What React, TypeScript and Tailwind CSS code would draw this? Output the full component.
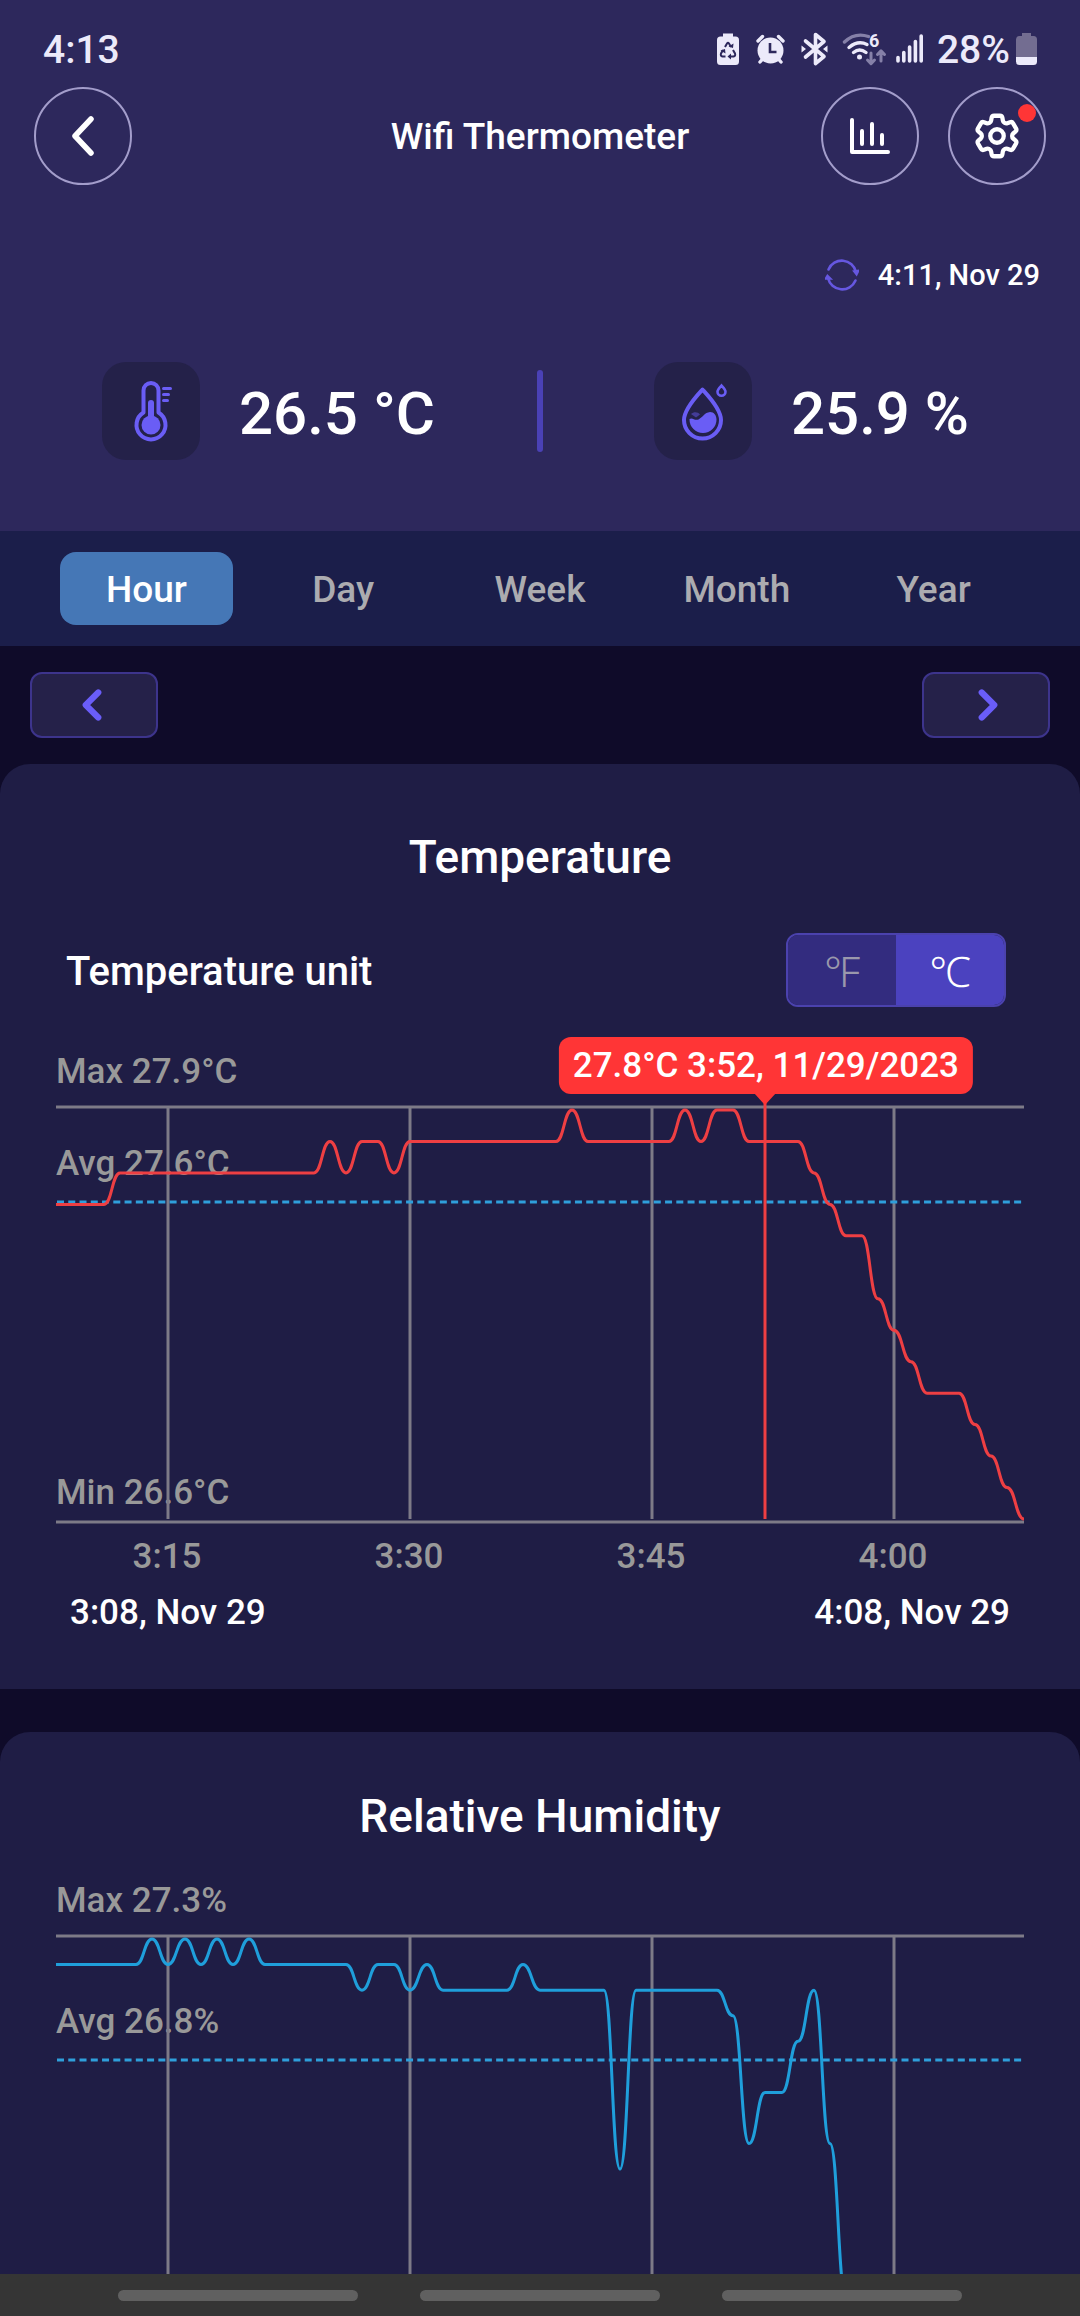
import React, { useState } from 'react';
import { ChevronLeft, ChevronRight } from 'lucide-react';
import { HiOutlineCog6Tooth } from 'react-icons/hi2';

const PERIODS = ['Hour', 'Day', 'Week', 'Month', 'Year'];

// One reading per minute, 3:08 to 4:08
const TEMPERATURE = [
  27.6, 27.6, 27.6, 27.6, 27.7, 27.7, 27.7, 27.7, 27.7, 27.7, 27.7, 27.7, 27.7, 27.7, 27.7,
  27.7, 27.7, 27.8, 27.7, 27.8, 27.8, 27.7, 27.8, 27.8, 27.8, 27.8, 27.8, 27.8, 27.8, 27.8,
  27.8, 27.8, 27.9, 27.8, 27.8, 27.8, 27.8, 27.8, 27.8, 27.9, 27.8, 27.9, 27.9, 27.8, 27.8,
  27.8, 27.8, 27.7, 27.6, 27.5, 27.5, 27.3, 27.2, 27.1, 27.0, 27.0, 27.0, 26.9, 26.8, 26.7,
  26.6,
];

const HUMIDITY = [
  27.2, 27.2, 27.2, 27.2, 27.2, 27.2, 27.3, 27.2, 27.3, 27.2, 27.3, 27.2, 27.3, 27.2, 27.2,
  27.2, 27.2, 27.2, 27.2, 27.1, 27.2, 27.2, 27.1, 27.2, 27.1, 27.1, 27.1, 27.1, 27.1, 27.2,
  27.1, 27.1, 27.1, 27.1, 27.1, 26.4, 27.1, 27.1, 27.1, 27.1, 27.1, 27.1, 27.0, 26.5, 26.7,
  26.7, 26.9, 27.1, 26.5, 25.9,
];

const TICKS = [
  { minute: 7, label: '3:15' },
  { minute: 22, label: '3:30' },
  { minute: 37, label: '3:45' },
  { minute: 52, label: '4:00' },
];

const CHART_WIDTH = 968;
const PLOT_TOP = 63;
const PLOT_BOTTOM = 472;

const minuteToX = (minute: number) => Math.floor((minute / 60) * CHART_WIDTH);

const valueToY = (value: number, min: number, max: number) =>
  PLOT_TOP + ((max - value) / (max - min)) * (PLOT_BOTTOM - PLOT_TOP);

// Smooth line that is level at every reading
const buildPath = (values: number[], min: number, max: number) =>
  values
    .map((value, i) => {
      const x = minuteToX(i);
      const y = valueToY(value, min, max);
      if (i === 0) return `M${x} ${y}`;
      const prevX = minuteToX(i - 1);
      const prevY = valueToY(values[i - 1], min, max);
      const midX = (prevX + x) / 2;
      return `C${midX} ${prevY} ${midX} ${y} ${x} ${y}`;
    })
    .join('');

interface ChartProps {
  name: string;
  values: number[];
  min: number;
  max: number;
  avgLabel: number;
  avgY: number;
  unit: string;
  color: string;
  showAxis?: boolean;
  marker?: { minute: number; text: string };
}

const Chart: React.FC<ChartProps> = ({
  name, values, min, max, avgLabel, avgY, unit, color, showAxis = false, marker
}) => {
  return (
    <div className="relative mx-14">
      <svg viewBox={`0 0 ${CHART_WIDTH} 533`} className="block w-full" role="img" aria-label={name}>
        <g fill="#999999" className="text-[35px] font-medium">
          <text x="0" y="36">{`Max ${max.toFixed(1)}${unit}`}</text>
          <text x="0" y={avgY - 27}>{`Avg ${avgLabel.toFixed(1)}${unit}`}</text>
          {showAxis && <text x="0" y="457">{`Min ${min.toFixed(1)}${unit}`}</text>}
          {showAxis && TICKS.map(t => (
            <text key={t.label} x={minuteToX(t.minute) - 1} y="521" textAnchor="middle">{t.label}</text>
          ))}
        </g>
        <g stroke="#7d7a87" strokeWidth="3">
          <path d={`M0 60H${CHART_WIDTH}M0 475H${CHART_WIDTH}`} />
          {TICKS.map(t => (
            <path key={t.label} d={`M${minuteToX(t.minute)} 60V${PLOT_BOTTOM}`} />
          ))}
        </g>
        <path d={`M1 ${avgY}H${CHART_WIDTH}`} stroke="#2f9fdb" strokeWidth="3" strokeDasharray="7 4.26" />
        <path d={buildPath(values, min, max)} fill="none" stroke={color} strokeWidth="3" />
        {marker && (
          <>
            <path d={`M${minuteToX(marker.minute)} 50V${PLOT_BOTTOM}`} stroke="#ee3f43" strokeWidth="3" />
            <path
              d={`M${minuteToX(marker.minute) - 11} 46h22l-11 12z`}
              fill="#ff3536"
            />
          </>
        )}
      </svg>
      {marker && (
        <div
          className="absolute -top-[10px] flex h-[57px] -translate-x-1/2 items-center whitespace-nowrap rounded-xl bg-[#ff3536] px-[14px] pt-0.5 text-[35px] font-medium text-white"
          style={{ left: `${(marker.minute / 60) * 100}%` }}
        >
          {marker.text}
        </div>
      )}
    </div>
  );
};

const StatusBar: React.FC = () => {
  return (
    <div className="flex h-[50px] items-center justify-between pl-[43px] pr-[43px] text-[39px] font-medium text-[#eceafa]">
      <span className="pt-0.5">4:13</span>
      <div className="flex items-center">
        <svg width="222" height="36" viewBox="715 32 222 36" fill="#eceafa" aria-hidden="true">
          {/* battery saver */}
          <path d="M723 34.500h10v3h2.500a3.500 3.500 0 0 1 3.500 3.500v21.500a3.500 3.500 0 0 1-3.500 3.500h-15a3.500 3.500 0 0 1-3.500-3.500V41a3.500 3.500 0 0 1 3.500-3.500h2.500z" />
          <path
            d="M725 48l2-3.500q1-1.500 2 0l2 3.500M733 51l2 3.500q.800 2.500-1.500 3h-4M725.500 57.500h-3q-2.300-.500-1.500-3l2-3.500"
            fill="none" stroke="#2d285c" strokeWidth="2"
          />
          <path d="M728.500 47.500l4.500 1.500 .500-4.500zM731 54.500l-3.500 3 3.500 3zM720.500 51.500l4.500-1.500 .500 4.500z" fill="#2d285c" />
          {/* alarm */}
          <circle cx="770.500" cy="51.500" r="13" />
          <path d="M770 44v9h6.500" fill="none" stroke="#2d285c" strokeWidth="2.600" />
          <path d="M758 42l4.500-4.500M783 42l-4.500-4.500M760 63l3-3.500M781 63l-3-3.500" fill="none" stroke="#eceafa" strokeWidth="3.400" strokeLinecap="round" />
          {/* bluetooth */}
          <path d="M805.500 42l18.500 15.500-8.500 7V35.500l8.500 7L805.500 58" fill="none" stroke="#eceafa" strokeWidth="3.600" strokeLinejoin="round" strokeLinecap="round" />
          <path d="M801.500 46.500l4.500 3.500-4.500 3.500zM827.500 46.500l-4.500 3.500 4.500 3.500z" />
          {/* wifi */}
          <path d="M844.500 43q10.500-10 24-5.500" fill="none" stroke="#8580a8" strokeWidth="3.400" strokeLinecap="round" />
          <path d="M849 48.500q9-7.500 18-3M853.500 53.500q6-5 12.500 0" fill="none" stroke="#eceafa" strokeWidth="3.400" strokeLinecap="round" />
          <circle cx="859.500" cy="58" r="2.500" />
          <text x="869" y="47.500" fontSize="18" fontWeight="700">6</text>
          <path d="M871 54v10M867.500 61l3.500 3.700 3.500-3.700M881 62V52M877.500 55.500l3.500-3.700 3.500 3.700" fill="none" stroke="#8580a8" strokeWidth="3" strokeLinecap="round" strokeLinejoin="round" />
          {/* signal */}
          <path d="M898 58.500V62M903.800 53.500V62M909.600 48V62M915.400 42.500V62M921.200 37V62" stroke="#eceafa" strokeWidth="3.600" strokeLinecap="round" />
        </svg>
        <span className="pt-0.5">28%</span>
        <svg width="21" height="32" viewBox="0 0 21 32" className="ml-[6px]" aria-hidden="true">
          <path d="M6 0h9v3h2.500A3.500 3.500 0 0 1 21 6.500V24H0V6.500A3.500 3.500 0 0 1 3.500 3H6z" fill="#736d91" />
          <path d="M0 24h21v4.500a3.500 3.500 0 0 1-3.500 3.500h-14A3.500 3.500 0 0 1 0 28.500z" fill="#eceafa" />
        </svg>
      </div>
    </div>
  );
};

const ThermometerIcon: React.FC = () => (
  <svg width="98" height="98" viewBox="0 0 98 98" fill="none" stroke="#6a5df5" aria-hidden="true">
    <path d="M41.500 50.500V28.500a7.500 7.500 0 0 1 15 0v22a14.500 14.500 0 1 1-15 0z" strokeWidth="4" strokeLinejoin="round" />
    <path d="M49 41v20" strokeWidth="6" strokeLinecap="round" />
    <circle cx="49" cy="63" r="9.500" fill="#6a5df5" stroke="none" />
    <path d="M61.500 26.500h7M61.500 32.500h5M61.500 38.500h4" strokeWidth="3" strokeLinecap="round" />
  </svg>
);

const DropletIcon: React.FC = () => (
  <svg width="98" height="98" viewBox="0 0 98 98" fill="none" stroke="#6a5df5" aria-hidden="true">
    <path d="M48.500 27.500c-5 5.500-18.500 19.500-18.500 30.500a18.500 18.500 0 0 0 37 0c0-11-13.500-25-18.500-30.500z" strokeWidth="4" strokeLinejoin="round" />
    <path d="M35.500 57c3-2 5 2 9 .500 4-2 6-7 11.500-7.500 4 0 6.500 3.500 6.500 7.500a13.500 13.500 0 0 1-27 0z" fill="#6a5df5" stroke="none" />
    <path d="M37 52c3-2.500 7-2 9 .500l-4 3z" fill="#443c99" stroke="none" />
    <path d="M67.500 23.500c-1.500 1.700-4 4-4 6.300a4 4 0 0 0 8 0c0-2.300-2.500-4.600-4-6.300z" strokeWidth="2.600" />
  </svg>
);

const SyncIcon: React.FC = () => (
  <svg width="34" height="34" viewBox="0 0 34 34" fill="none" stroke="#6657e0" strokeWidth="2.600" strokeLinecap="round" aria-hidden="true">
    <path d="M3.500 11.500A14.500 14.500 0 0 1 31 14M30.500 22.500A14.500 14.500 0 0 1 3 20" />
    <path d="M29.500 13.500l2 2.500 1.500-3zM1 20.500l1.500-2.500 2.500 2.500z" fill="#6657e0" />
  </svg>
);

interface MetricProps {
  icon: React.ReactNode;
  value: string;
}

const Metric: React.FC<MetricProps> = ({ icon, value }) => (
  <div className="flex flex-1 items-center justify-center gap-[39px]">
    <div className="size-[98px] rounded-3xl bg-[#242149]">{icon}</div>
    <span className="pt-1.5 text-[60px] font-medium leading-[72px]">{value}</span>
  </div>
);

const ROUND_BUTTON = 'relative flex size-[98px] items-center justify-center rounded-full border-2 border-[#a39dcb]';
const STEP_BUTTON = 'flex h-[66px] w-[128px] items-center justify-center rounded-xl border-2 border-[#3d348c] bg-[#252149] text-[#6a5df8]';

const App: React.FC = () => {
  const [period, setPeriod] = useState('Hour');
  const [unit, setUnit] = useState('C');

  return (
    <div className="flex h-screen flex-col overflow-hidden bg-[#0f0b29] font-[Roboto,sans-serif] text-white">
      <header className="shrink-0 bg-[#2d285c] pb-[71px] pt-6">
        <StatusBar />

        <div className="mt-[13px] grid grid-cols-[1fr_auto_1fr] items-center px-[34px]">
          <button className={ROUND_BUTTON} aria-label="Back">
            <svg width="24" height="40" viewBox="0 0 24 40" fill="none" stroke="white" strokeWidth="5.500" strokeLinecap="round" strokeLinejoin="round">
              <path d="M20 3L4 20l16 17" />
            </svg>
          </button>
          <h1 className="pt-0.5 text-[37px] font-medium">Wifi Thermometer</h1>
          <div className="flex justify-end gap-[29px]">
            <button className={ROUND_BUTTON} aria-label="Statistics">
              <svg width="40" height="36" viewBox="0 0 40 36" fill="none" stroke="white" strokeWidth="4" strokeLinecap="round" strokeLinejoin="round">
                <path d="M2 2v32h36M12 13v13M22 6v20M32 17v9" />
              </svg>
            </button>
            <button className={ROUND_BUTTON} aria-label="Settings">
              <HiOutlineCog6Tooth size={54} className="[&_path]:[stroke-width:1.9]" />
              <span className="absolute right-2 top-[15px] size-[18px] rounded-full bg-[#ff3536]" />
            </button>
          </div>
        </div>

        <div className="mt-[72px] flex h-9 items-center justify-end gap-[19px] pr-10">
          <SyncIcon />
          <span className="pt-0.5 text-[29px] font-medium">4:11, Nov 29</span>
        </div>

        <div className="mt-[69px] flex items-center">
          <Metric icon={<ThermometerIcon />} value="26.5 °C" />
          <div className="h-[82px] w-[6px] rounded-sm bg-[#4a41b5]" />
          <Metric icon={<DropletIcon />} value="25.9 %" />
        </div>
      </header>

      <nav className="flex shrink-0 bg-[#1b1e4a] px-12 py-[21px]">
        {PERIODS.map(p => (
          <button
            key={p}
            onClick={() => setPeriod(p)}
            className={`mx-3 h-[73px] flex-1 rounded-2xl pt-0.5 text-[37px] font-medium ${
              p === period ? 'bg-[#4577b6] text-white' : 'text-[#acacb0]'
            }`}
          >
            {p}
          </button>
        ))}
      </nav>

      <main className="flex min-h-0 flex-1 flex-col">
        <div className="flex justify-between px-[30px] py-[26px]">
          <button className={`${STEP_BUTTON} pr-1`} aria-label="Previous">
            <ChevronLeft size={50} strokeWidth={3} />
          </button>
          <button className={`${STEP_BUTTON} pl-1`} aria-label="Next">
            <ChevronRight size={50} strokeWidth={3} />
          </button>
        </div>

        <section className="rounded-t-[30px] bg-[#1f1d45] pb-14 pt-[65px]">
          <h2 className="text-center text-[46px] font-medium leading-[56px]">Temperature</h2>
          <div className="mt-12 flex items-center justify-between pl-[66px] pr-[74px]">
            <span className="pt-1 text-[40px] font-medium">Temperature unit</span>
            <div className="flex h-[74px] w-[220px] overflow-hidden rounded-xl border-2 border-[#4b42ae] font-['Noto_Sans',sans-serif] text-[42px] font-light">
              <button
                onClick={() => setUnit('F')}
                className={`flex flex-1 items-center justify-center ${unit === 'F' ? 'bg-[#4b42bf] text-white' : 'bg-[#332c7f] text-[#9a98ac]'}`}
              >
                ℉
              </button>
              <button
                onClick={() => setUnit('C')}
                className={`flex flex-1 items-center justify-center ${unit === 'C' ? 'bg-[#4b42bf] text-white' : 'bg-[#332c7f] text-[#9a98ac]'}`}
              >
                ℃
              </button>
            </div>
          </div>
          <div className="mt-10">
            <Chart
              name="Temperature"
              values={TEMPERATURE}
              min={26.6}
              max={27.9}
              avgLabel={27.6}
              avgY={155}
              unit="°C"
              color="#ee3f43"
              showAxis
              marker={{ minute: 44, text: '27.8°C 3:52, 11/29/2023' }}
            />
          </div>
          <div className="mt-[13px] flex justify-between px-[70px] text-[35px] font-medium leading-10">
            <span>3:08, Nov 29</span>
            <span>4:08, Nov 29</span>
          </div>
        </section>

        <section className="mt-[43px] min-h-0 flex-1 overflow-hidden rounded-t-[30px] bg-[#1f1d45] pt-14">
          <h2 className="text-center text-[46px] font-medium leading-[56px]">Relative Humidity</h2>
          <div className="mt-8">
            <Chart
              name="Relative Humidity"
              values={HUMIDITY}
              min={25.7}
              max={27.3}
              avgLabel={26.8}
              avgY={184}
              unit="%"
              color="#1f9fdb"
            />
          </div>
        </section>
      </main>

      <footer className="flex h-[42px] shrink-0 items-center justify-center gap-[62px] bg-[#353535]">
        <span className="h-[11px] w-60 rounded-full bg-[#606060]" />
        <span className="h-[11px] w-60 rounded-full bg-[#606060]" />
        <span className="h-[11px] w-60 rounded-full bg-[#606060]" />
      </footer>
    </div>
  );
};

export default App;
